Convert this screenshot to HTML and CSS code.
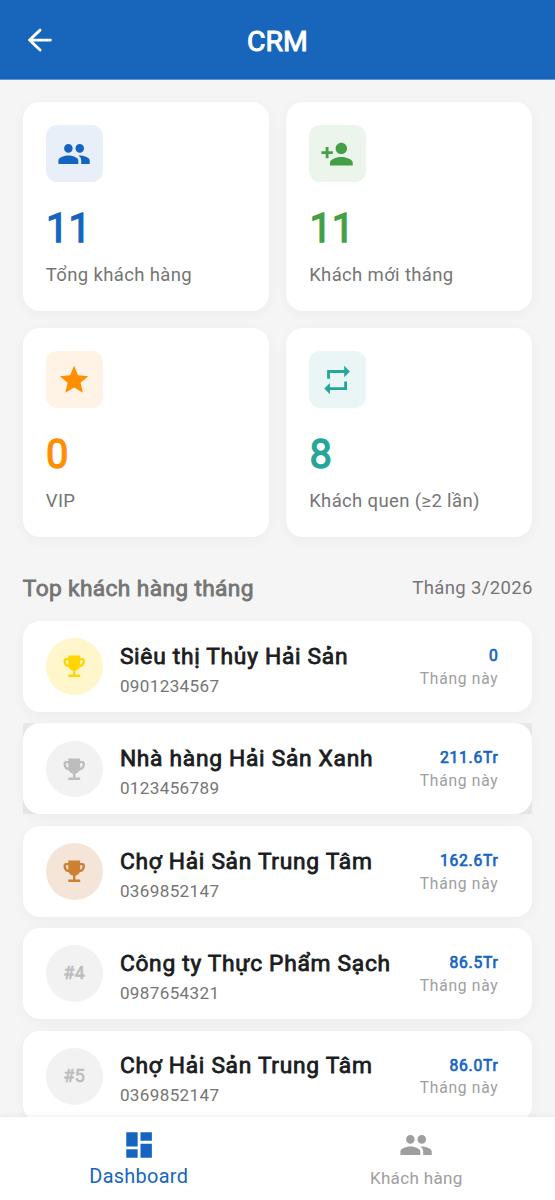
FILE: index.html
```html
<!DOCTYPE html>
<html lang="vi">
<head>
<meta charset="utf-8">
<title>CRM</title>
<link rel="stylesheet" href="styles.css">
</head>
<body>
<svg class="defs" aria-hidden="true">
  <symbol id="people" viewBox="0 0 24 24"><path d="M16 11c1.66 0 2.99-1.34 2.99-3S17.66 5 16 5s-3 1.34-3 3 1.34 3 3 3zm-8 0c1.66 0 2.99-1.34 2.99-3S9.66 5 8 5 5 6.34 5 8s1.34 3 3 3zm0 2c-2.33 0-7 1.17-7 3.5V19h14v-2.5c0-2.33-4.67-3.5-7-3.5zm8 0c-.29 0-.62.02-.97.05 1.16.84 1.97 1.97 1.97 3.45V19h6v-2.5c0-2.33-4.67-3.5-7-3.5z"/></symbol>
  <symbol id="trophy" viewBox="0 0 24 24"><path d="M19 5h-2V3H7v2H5c-1.1 0-2 .9-2 2v1c0 2.55 1.92 4.63 4.39 4.94.63 1.5 1.98 2.63 3.61 2.96V19H7v2h10v-2h-4v-3.1c1.63-.33 2.98-1.46 3.61-2.96C19.08 12.63 21 10.55 21 8V7c0-1.1-.9-2-2-2zM5 8V7h2v3.82C5.84 10.4 5 9.3 5 8zm14 0c0 1.3-.84 2.4-2 2.82V7h2v1z"/></symbol>
</svg>
<div class="app">
  <header class="bar">
    <svg class="icon back" viewBox="0 0 24 24"><path d="M20 12H5.3M12.7 5L5.3 12l7.4 7"/></svg>
    <h1 class="title">CRM</h1>
  </header>
  <main class="content">
    <section class="stats">
      <article class="stat blue">
        <div class="tile"><svg class="icon"><use href="#people"/></svg></div>
        <div class="number">11</div>
        <div class="label">Tổng khách hàng</div>
      </article>
      <article class="stat green">
        <div class="tile"><svg class="icon" viewBox="0 0 24 24"><path d="M15 12c2.21 0 4-1.79 4-4s-1.79-4-4-4-4 1.79-4 4 1.79 4 4 4zm-9-2V7H4v3H1v2h3v3h2v-3h3v-2H6zm9 4c-2.67 0-8 1.34-8 4v2h16v-2c0-2.66-5.33-4-8-4z"/></svg></div>
        <div class="number">11</div>
        <div class="label">Khách mới tháng</div>
      </article>
      <article class="stat orange">
        <div class="tile"><svg class="icon" viewBox="0 0 24 24"><path d="M12 17.27L18.18 21l-1.64-7.03L22 9.24l-7.19-.61L12 2 9.19 8.63 2 9.24l5.46 4.73L5.82 21z"/></svg></div>
        <div class="number">0</div>
        <div class="label">VIP</div>
      </article>
      <article class="stat teal">
        <div class="tile"><svg class="icon" viewBox="0 0 24 24"><path d="M7 7h10v3l4-4-4-4v3H5v6h2V7zm10 10H7v-3l-4 4 4 4v-3h12v-6h-2v4z"/></svg></div>
        <div class="number">8</div>
        <div class="label">Khách quen (≥2 lần)</div>
      </article>
    </section>
    <div class="heading">
      <h2 class="heading-title">Top khách hàng tháng</h2>
      <span class="heading-date">Tháng 3/2026</span>
    </div>
    <section class="list">
      <article class="row">
        <div class="rank gold"><svg class="cup"><use href="#trophy"/></svg></div>
        <div class="who"><div class="name">Siêu thị Thủy Hải Sản</div><div class="phone">0901234567</div></div>
        <div class="sum"><div class="value">0</div><div class="period">Tháng này</div></div>
      </article>
      <div class="row-pressed">
        <article class="row">
          <div class="rank silver"><svg class="cup"><use href="#trophy"/></svg></div>
          <div class="who"><div class="name">Nhà hàng Hải Sản Xanh</div><div class="phone">0123456789</div></div>
          <div class="sum"><div class="value">211.6Tr</div><div class="period">Tháng này</div></div>
        </article>
      </div>
      <article class="row">
        <div class="rank bronze"><svg class="cup"><use href="#trophy"/></svg></div>
        <div class="who"><div class="name">Chợ Hải Sản Trung Tâm</div><div class="phone">0369852147</div></div>
        <div class="sum"><div class="value">162.6Tr</div><div class="period">Tháng này</div></div>
      </article>
      <article class="row">
        <div class="rank silver">#4</div>
        <div class="who"><div class="name">Công ty Thực Phẩm Sạch</div><div class="phone">0987654321</div></div>
        <div class="sum"><div class="value">86.5Tr</div><div class="period">Tháng này</div></div>
      </article>
      <article class="row">
        <div class="rank silver">#5</div>
        <div class="who"><div class="name">Chợ Hải Sản Trung Tâm</div><div class="phone">0369852147</div></div>
        <div class="sum"><div class="value">86.0Tr</div><div class="period">Tháng này</div></div>
      </article>
    </section>
  </main>
  <nav class="tabs">
    <div class="tab active">
      <svg class="icon" viewBox="0 0 24 24"><path d="M3 13h8V3H3v10zm0 8h8v-6H3v6zm10 0h8V11h-8v10zm0-18v6h8V3h-8z"/></svg>
      <span class="tab-label">Dashboard</span>
    </div>
    <div class="tab">
      <svg class="icon"><use href="#people"/></svg>
      <span class="tab-label">Khách hàng</span>
    </div>
  </nav>
</div>
</body>
</html>
```
FILE: styles.css
```css
* { box-sizing: border-box; margin: 0; }
body { font-family: Roboto, sans-serif; font-weight: 400; color: #1a1c1e; background: #f5f5f5; }
.defs { display: none; }
.app { height: 1200px; display: flex; flex-direction: column; overflow: hidden; }
.icon { width: 34.15px; height: 34.15px; fill: currentColor; display: block; }

.bar { flex: none; height: 80px; background: #1865bc; border-bottom: 1px solid #5e96d4; color: #fff; display: grid; grid-template-columns: 80px 1fr 80px; align-items: center; }
.back { justify-self: center; margin-top: 1px; margin-right: 1px; fill: none; stroke: currentColor; stroke-width: 2; stroke-linecap: round; stroke-linejoin: round; }
.title { font-size: 28.4px; font-weight: 400; -webkit-text-stroke: 1px; text-align: center; padding-top: 3px; }

.content { flex: 1; min-height: 0; overflow: hidden; padding: 22.4px 22.8px 0; }
.stats { display: grid; grid-template-columns: 1fr 1fr; gap: 17.3px; }
.stat { background: #fff; border-radius: 17px; padding: 22.8px 23px; height: 208.7px; box-shadow: 0 3px 14px rgba(0,0,0,.04); }
.tile { width: 56.8px; height: 56.8px; border-radius: 11.4px; display: grid; place-items: center; }
.number { font-size: 39.85px; line-height: 46.7px; margin-top: 24px; padding-left: .3px; -webkit-text-stroke: 1.3px; }
.label { font-size: 18.5px; line-height: 26.4px; margin-top: 9.4px; letter-spacing: .356px; color: #757575; }
.blue { color: #1565c0; } .blue .tile { background: #e8eff9; }
.green { color: #43a047; } .green .tile { background: #ecf5ec; }
.orange { color: #ff8f00; } .orange .tile { background: #fff3e6; }
.teal { color: #26a69a; } .teal .tile { background: #e9f6f5; }

.heading { display: flex; justify-content: space-between; align-items: center; height: 34px; margin: 34.2px 0 15.8px; color: #757575; }
.heading-title { font-size: 22.77px; font-weight: 400; letter-spacing: .35px; padding-top: 1px; -webkit-text-stroke: .8px; }
.heading-date { font-size: 18.5px; letter-spacing: .356px; margin-right: -.5px; }

.list { display: flex; flex-direction: column; gap: 11.4px; }
.row { height: 91px; background: #fff; border-radius: 17px; padding: 0 33.8px 0 23px; display: flex; align-items: center; gap: 17.3px; box-shadow: 0 3px 14px rgba(0,0,0,.04); }
.row-pressed { background: #e8e8e8; }
.rank { width: 56.8px; height: 56.8px; border-radius: 50%; display: grid; place-items: center; font-size: 17.7px; letter-spacing: .3px; line-height: 20px; padding-bottom: 1px; -webkit-text-stroke: .7px; }
.cup { width: 28.46px; height: 28.46px; fill: currentColor; stroke: none; margin-top: 1px; }
.gold { color: #ffd600; background: #fff6cc; }
.silver { color: #bdbdbd; background: #f2f2f2; }
.bronze { color: #cd7f32; background: #f5e4d8; }
.who { flex: 1; padding-top: 4.4px; }
.name { font-size: 22.77px; line-height: 34px; letter-spacing: .71px; -webkit-text-stroke: .8px; white-space: nowrap; }
.phone { font-size: 17.08px; line-height: 24px; letter-spacing: .356px; color: #757575; }
.sum { text-align: right; line-height: 22.8px; letter-spacing: .71px; font-size: 15.65px; padding-top: 2.4px; }
.value { color: #1565c0; -webkit-text-stroke: .7px; }
.period { color: #9e9e9e; }

.tabs { flex: none; height: 83px; background: #fff; display: grid; grid-template-columns: 1fr 1fr; box-shadow: 0 -1px 5px rgba(0,0,0,.06); position: relative; }
.tab { display: flex; flex-direction: column; align-items: center; padding-top: 10.8px; color: #9e9e9e; }
.tab-label { font-size: 17.08px; line-height: 28px; letter-spacing: .3px; margin-top: 1.6px; }
.active { color: #1565c0; }
.active .tab-label { font-size: 19.92px; line-height: 24px; letter-spacing: .28px; margin-top: 2.8px; }
```
